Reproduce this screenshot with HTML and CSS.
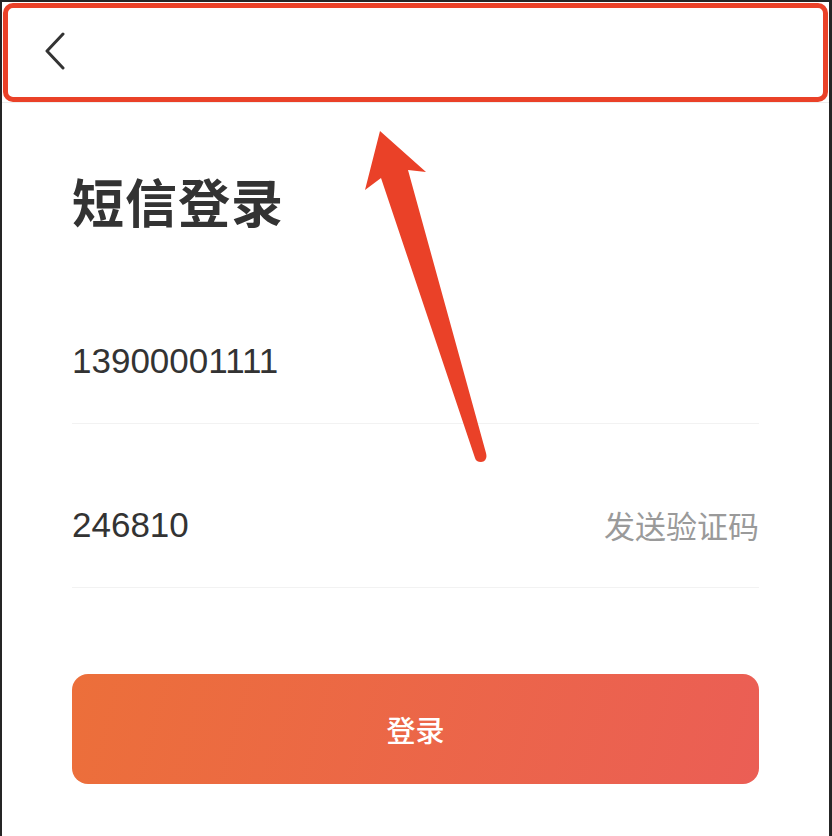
FILE: index.html
```html
<!DOCTYPE html>
<html lang="zh-CN">
<head>
<meta charset="utf-8">
<title>短信登录</title>
<link rel="stylesheet" href="styles.css">
</head>
<body>
<div class="page">
  <header class="header">
    <svg class="back" width="24" height="40" viewBox="0 0 24 40" aria-hidden="true">
      <polyline points="19,2 3,19 19,36" fill="none" stroke="#333" stroke-width="3" stroke-linecap="round" stroke-linejoin="round"/>
    </svg>
  </header>
  <main class="content">
    <h1 class="title">短信登录</h1>
    <div class="row">
      <span class="value">13900001111</span>
    </div>
    <div class="row">
      <span class="value">246810</span>
      <span class="send">发送验证码</span>
    </div>
    <button class="login">登录</button>
  </main>
</div>
<div class="mark-box"></div>
<svg class="mark-arrow" width="832" height="836" viewBox="0 0 832 836" aria-hidden="true">
  <path d="M380,131 L426,172 L408,170 L486,453 Q488,461 481,462 Q476,462 475,458 L381,178 L365,190 Z" fill="#ea4128"/>
</svg>
</body>
</html>
```
FILE: styles.css
```css
html, body {
  margin: 0;
  padding: 0;
}
body {
  background: #252525;
  width: 832px;
  height: 836px;
  overflow: hidden;
  position: relative;
  font-family: "Liberation Sans", "Noto Sans CJK SC", sans-serif;
}
.page {
  margin: 2px 3px 0 2px;
  background: #fff;
  height: 834px;
}
.header {
  height: 100px;
  border-bottom: 1px solid #eeeeee;
  display: flex;
  align-items: center;
  padding-left: 42px;
}
.back {
  display: block;
}
.content {
  padding: 0 70px;
}
.title {
  margin: 62px 0 0;
  font-family: "Noto Sans CJK SC", sans-serif;
  font-weight: 700;
  font-size: 52px;
  line-height: 72px;
  color: #333;
  letter-spacing: 1px;
}
.row {
  display: flex;
  justify-content: space-between;
  align-items: center;
  height: 40px;
  padding: 81px 0 42px;
  border-bottom: 1px solid #f2f2f2;
}
.title + .row {
  padding-top: 104px;
}
.value {
  font-family: "Liberation Sans", Arial, sans-serif;
  font-size: 35px;
  color: #333;
  line-height: 40px;
}
.send {
  font-family: "Noto Sans CJK SC", sans-serif;
  font-size: 31px;
  color: #9a9a9a;
  line-height: 40px;
}
.login {
  display: flex;
  align-items: center;
  justify-content: center;
  width: 100%;
  height: 110px;
  margin-top: 86px;
  border: none;
  border-radius: 16px;
  background: linear-gradient(105deg, #ec6f3a 0%, #eb5e55 100%);
  color: #fff;
  font-family: "Noto Sans CJK SC", sans-serif;
  font-size: 29px;
  font-weight: 500;
  padding: 0;
}
.mark-box {
  position: absolute;
  left: 3px;
  top: 3px;
  width: 825px;
  height: 99px;
  box-sizing: border-box;
  border: 5px solid #ea4128;
  border-radius: 10px;
}
.mark-arrow {
  position: absolute;
  left: 0;
  top: 0;
  pointer-events: none;
}
```
